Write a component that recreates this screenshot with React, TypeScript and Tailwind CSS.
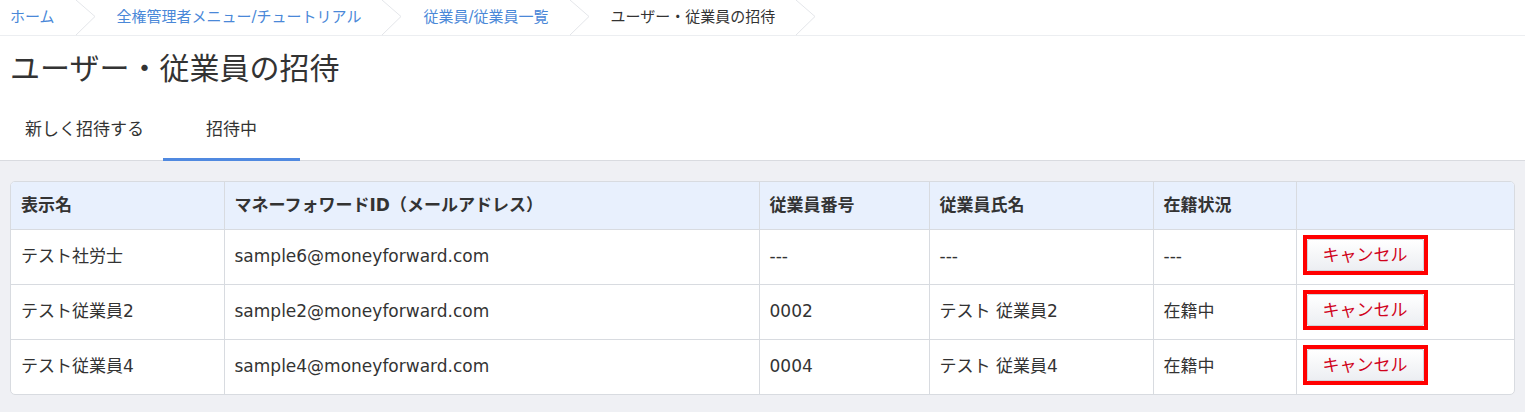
import React from 'react';

type Invite = {
  displayName: string;
  email: string;
  number: string;
  name: string;
  status: string;
};

const invites: Invite[] = [
  { displayName: 'テスト社労士', email: 'sample6@moneyforward.com', number: '---', name: '---', status: '---' },
  { displayName: 'テスト従業員2', email: 'sample2@moneyforward.com', number: '0002', name: 'テスト 従業員2', status: '在籍中' },
  { displayName: 'テスト従業員4', email: 'sample4@moneyforward.com', number: '0004', name: 'テスト 従業員4', status: '在籍中' },
];

const crumbs = [
  { label: 'ホーム', link: true },
  { label: '全権管理者メニュー/チュートリアル', link: true },
  { label: '従業員/従業員一覧', link: true },
  { label: 'ユーザー・従業員の招待', link: false },
];

const Chevron = () => (
  <svg width="22" height="36" viewBox="0 0 22 36" className="mx-[20px] shrink-0">
    <path d="M1 0 L20 16.5 L1 35" fill="none" stroke="#e4e6ea" strokeWidth="1" />
  </svg>
);

const App: React.FC = () => {
  return (
    <div
      className="w-[1525px] h-[412px] bg-[#eff0f4] text-[#333] overflow-hidden"
      style={{ fontFamily: '"DejaVu Sans", "Noto Sans CJK JP", sans-serif' }}
    >
      <div className="bg-white">
        {/* breadcrumb */}
        <nav className="flex items-center h-[36px] pl-[10px] border-b border-[#eceef1] text-[15px]">
          {crumbs.map((c) => (
            <React.Fragment key={c.label}>
              <span className={`whitespace-nowrap ${c.link ? 'text-[#4a88d8]' : 'text-[#333]'}`}>{c.label}</span>
              <Chevron />
            </React.Fragment>
          ))}
        </nav>

        <h1 className="pl-[10px] pt-[12px] text-[30px] leading-[42px] font-normal">ユーザー・従業員の招待</h1>

        {/* tabs */}
        <div className="flex mt-[20px] border-b border-[#d9dbe0] text-[17px] leading-[24px]">
          <div className="pl-[25px] pt-[7px] pb-[17px] w-[163px] whitespace-nowrap border-b-[3px] border-transparent -mb-px">
            新しく招待する
          </div>
          <div className="pt-[7px] pb-[17px] w-[137px] text-center whitespace-nowrap border-b-[3px] border-[#5089e0] -mb-px">
            招待中
          </div>
        </div>
      </div>

      <div className="px-[10px] pt-[20px]">
        <div className="bg-white border border-[#d8dbe0] rounded-[5px] overflow-hidden">
          <table className="w-full table-fixed border-collapse text-[17px]">
            <colgroup>
              <col className="w-[213px]" />
              <col className="w-[535px]" />
              <col className="w-[170px]" />
              <col className="w-[224px]" />
              <col className="w-[143px]" />
              <col />
            </colgroup>
            <thead>
              <tr className="bg-[#e8f0fd] h-[47px]">
                {['表示名', 'マネーフォワードID（メールアドレス）', '従業員番号', '従業員氏名', '在籍状況', ''].map((h, i) => (
                  <th
                    key={i}
                    className={`text-left font-bold px-[10px] border-b border-[#d8dbe0] ${i < 5 ? 'border-r' : ''}`}
                  >
                    {h}
                  </th>
                ))}
              </tr>
            </thead>
            <tbody>
              {invites.map((row, idx) => (
                <tr key={row.email} className="h-[55px]">
                  {[row.displayName, row.email, row.number, row.name, row.status].map((v, i) => (
                    <td
                      key={i}
                      className={`px-[10px] border-r border-[#d8dbe0] ${idx < invites.length - 1 ? 'border-b' : ''}`}
                    >
                      {v}
                    </td>
                  ))}
                  <td className={`pl-[6px] pb-[3px] border-[#d8dbe0] ${idx < invites.length - 1 ? 'border-b' : ''}`}>
                    <div className="inline-block align-middle border-[4px] border-[#ff0000]">
                      <button className="block w-[117px] h-[32px] border border-[#cfd3d9] rounded-[2px] bg-gradient-to-b from-white to-[#eceef2] text-[#d0021b] text-[17px] leading-[30px]">
                        キャンセル
                      </button>
                    </div>
                  </td>
                </tr>
              ))}
            </tbody>
          </table>
        </div>
      </div>
    </div>
  );
};

export default App;
